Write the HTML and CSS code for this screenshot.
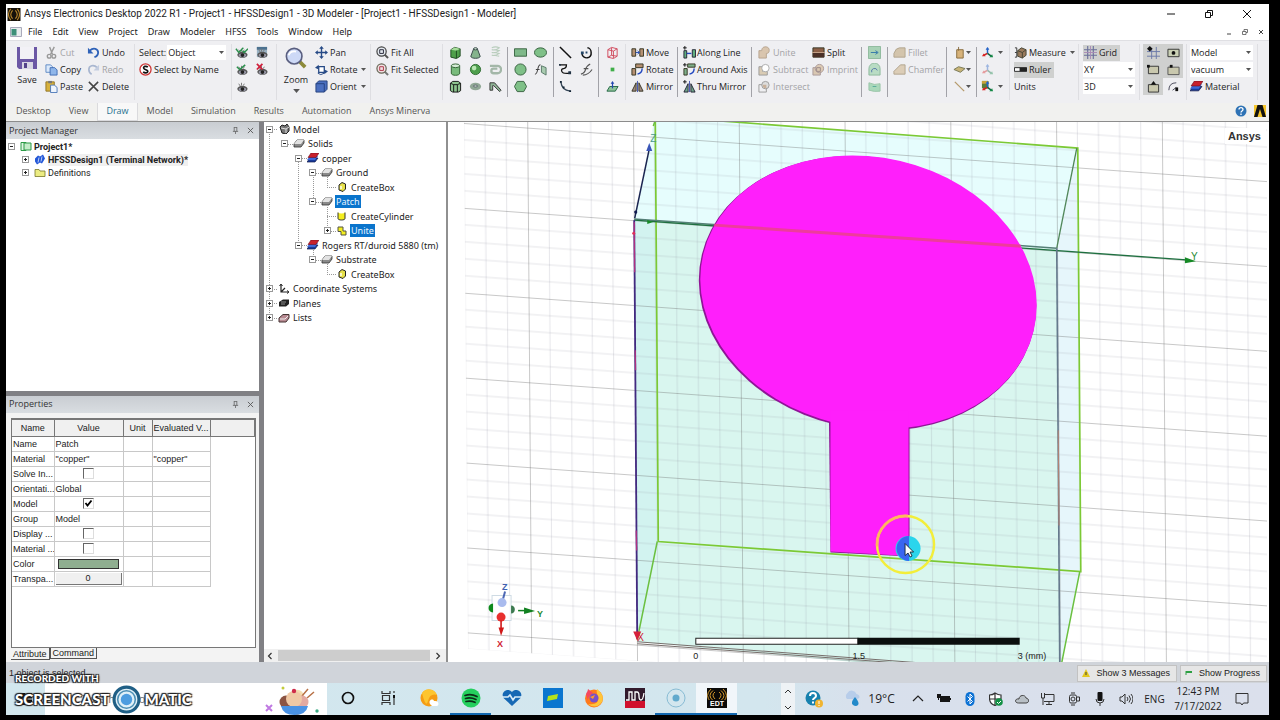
FILE: index.html
```html
<!DOCTYPE html>
<html lang="en">
<head>
<meta charset="utf-8">
<title>Ansys Electronics Desktop 2022 R1</title>
<link rel="stylesheet" href="styles.css">
</head>
<body>
<svg class="defs" aria-hidden="true">
  <symbol id="caret" viewBox="0 0 5 3"><path d="M0 0h5L2.500 3z" fill="#555"/></symbol>
  <symbol id="eye" viewBox="0 0 14 14"><path d="M4 4l2 3M7 3v3M10 4L9 6" stroke="#777" stroke-width="1"/><ellipse cx="8" cy="9.500" rx="5.500" ry="3.200" fill="#555"/><ellipse cx="8" cy="10" rx="4" ry="2" fill="#99a"/><circle cx="8" cy="9.800" r="2" fill="#222"/></symbol>
  <symbol id="sheet" viewBox="0 0 12 10"><path d="M3 5h8l-3 4H0z" fill="#173b9c" stroke="#101848" stroke-width=".7"/><path d="M3 3h8L8 7H0z" fill="#3d68d8"/><path d="M4 0h8L9 4.500H1z" fill="#c8202c" stroke="#701020" stroke-width=".6"/></symbol>
  <symbol id="solid" viewBox="0 0 12 10"><path d="M4 1h7v3L8 8H1V5z" fill="#8a8a8a" stroke="#333" stroke-width=".8"/><path d="M4 1h7L8 5H1z" fill="#e2e2e2"/></symbol>
  <symbol id="ybox" viewBox="0 0 12 10"><path d="M3 3l3-2.500L9.500 2v5L7 9.500 3 8z" fill="#e6e04a" stroke="#222" stroke-width="1"/><path d="M5 4v3" stroke="#fff" stroke-width="1.400"/></symbol>
  <symbol id="axes" viewBox="0 0 14 14"><path d="M7 8V2" stroke="#2463c8" stroke-width="1.600"/><path d="M5 4l2-3 2 3z" fill="#2463c8"/><path d="M7 8l-4 2" stroke="#c22" stroke-width="1.600"/><path d="M1 11l2-3 2 3z" fill="#d22"/><path d="M7 8l4 3" stroke="#164" stroke-width="1.600"/><path d="M13 12H9l3-3z" fill="#184"/></symbol>
  <symbol id="ice" viewBox="0 0 12 18"><path d="M2 8h8L6 17z" fill="#c98f55"/><circle cx="6" cy="5" r="4" fill="#f4dcb0"/><path d="M1 8h10" stroke="#f0c88c" stroke-width="2.500"/></symbol>
</svg>
<div class="app">
  <header class="titlebar">
    <svg class="logo" viewBox="0 0 14 14"><path d="M0 0h14v14H0z" fill="#16110a"/><path d="M5.500 2.500q-4 4.500 0 9M3.500 1q-5 6 0 12M8.500 2.500q4 4.500 0 9M10.500 1q5 6 0 12" fill="none" stroke="#b8862c" stroke-width="1.200"/></svg>
    <h1>Ansys Electronics Desktop 2022 R1 - Project1 - HFSSDesign1 - 3D Modeler - [Project1 - HFSSDesign1 - Modeler]</h1>
    <div class="winctl">
      <button aria-label="Minimize"><svg viewBox="0 0 10 10"><path d="M1 5h8" stroke="#111"/></svg></button>
      <button aria-label="Restore"><svg viewBox="0 0 10 10"><path d="M1.500 3.500h5v5h-5zM3.500 3.500v-2h5v5h-2" fill="none" stroke="#111"/></svg></button>
      <button aria-label="Close"><svg viewBox="0 0 10 10"><path d="M1 1l8 8M9 1L1 9" stroke="#111"/></svg></button>
    </div>
  </header>
  <nav class="menubar">
    <svg class="mdi" viewBox="0 0 12 10"><path d="M.5.5h11v9H.5z" fill="#e8ecee" stroke="#aab"/><path d="M1.500 2h5v6.500h-5z" fill="#3c8f78"/></svg>
    <button>File</button><button>Edit</button><button>View</button><button>Project</button><button>Draw</button><button>Modeler</button><button>HFSS</button><button>Tools</button><button>Window</button><button>Help</button>
    <div class="mdictl">
      <button aria-label="Minimize document"><svg viewBox="0 0 6 6"><path d="M1 5h4" stroke="#444"/></svg></button>
      <button aria-label="Restore document"><svg viewBox="0 0 6 6"><path d="M.5 2.500h3.500v3H.5zM2 2.500v-2h3.500v3H4" fill="none" stroke="#555" stroke-width=".8"/></svg></button>
      <button aria-label="Close document"><svg viewBox="0 0 6 6"><path d="M1 1l4 4M5 1L1 5" stroke="#444"/></svg></button>
    </div>
  </nav>

  <section class="ribbon" aria-label="Draw ribbon">
    <div class="group g-clip">
      <button class="big"><svg viewBox="0 0 22 22"><path d="M1 0h20v22H3l-2-2z" fill="#6b57a5"/><path d="M4 0h14v12H4z" fill="#f2f1f6"/><path d="M6 15h11v7H6z" fill="#d8d6e4"/><path d="M8 16h3v5H8z" fill="#53428a"/></svg>Save</button>
      <button class="cmd off"><svg viewBox="0 0 14 14"><path d="M5 1l3 8M10 1L6 9" stroke="#999" stroke-width="1.500"/><circle cx="4.500" cy="11" r="2" fill="none" stroke="#999" stroke-width="1.500"/><circle cx="9.500" cy="11" r="2" fill="none" stroke="#999" stroke-width="1.500"/></svg>Cut</button>
      <button class="cmd"><svg viewBox="0 0 14 14"><path d="M1 2h5l2 2v6H1z" fill="#dbe9fa" stroke="#5c87c4"/><path d="M5.500 5h5l2.500 2.500V13H5.500z" fill="#8fb6ea" stroke="#3f6cb4"/></svg>Copy</button>
      <button class="cmd"><svg viewBox="0 0 14 14"><path d="M1 2h9v10H1z" fill="#d7b13d" stroke="#8f7426"/><path d="M3.500 1h4v2.500h-4z" fill="#777"/><path d="M6 5.500h4l3 2.500v5.500H6z" fill="#eef4fc" stroke="#4b77b8"/></svg>Paste</button>
      <button class="cmd"><svg viewBox="0 0 14 14"><path d="M3 5c4-4 9-2 9 2 0 2-1 4-4 5" fill="none" stroke="#2f62b8" stroke-width="2"/><path d="M1 2v6h6z" fill="#2f62b8"/></svg>Undo</button>
      <button class="cmd off"><svg viewBox="0 0 14 14"><path d="M11 5c-4-4-9-2-9 2 0 2 1 4 3 5" fill="none" stroke="#a8b6d0" stroke-width="1.800"/><path d="M13 2v6H7z" fill="#c4cde0"/></svg>Redo</button>
      <button class="cmd"><svg viewBox="0 0 14 14"><path d="M2 2l10 10M12 2L2 12" stroke="#444" stroke-width="1.600"/></svg>Delete</button>
    </div>
    <div class="group g-select">
      <label class="field">Select:<select><option>Object</option></select></label>
      <button class="cmd"><svg viewBox="0 0 14 14"><circle cx="7" cy="7" r="6" fill="#fff" stroke="#c33" stroke-width="1.400"/><path d="M9.500 4.500C8 3 4.500 3.500 5 5.500s4.500 1.500 4.500 3.500S6 11 4.500 9.500" fill="none" stroke="#111" stroke-width="1.800"/></svg>Select by Name</button>
    </div>
    <div class="group g-vis">
      <button class="ico" aria-label="Show"><svg viewBox="0 0 14 14"><use href="#eye"/><path d="M1 3l3 4 5-5M8 5l2 2 4-4" fill="none" stroke="#2b8f4c" stroke-width="1.500"/></svg></button>
      <button class="ico" aria-label="Show selection"><svg viewBox="0 0 14 14"><use href="#eye"/><path d="M2 4l3 3 6-5" fill="none" stroke="#2b8f4c" stroke-width="1.600"/></svg></button>
      <button class="ico" aria-label="Hide"><svg viewBox="0 0 14 14"><use href="#eye"/></svg></button>
      <button class="ico" aria-label="Visibility"><svg viewBox="0 0 14 14"><path d="M2 1h11v11H2z" fill="#9ab2c4"/><path d="M2 1h11v3H2z" fill="#4d7290"/><use href="#eye"/></svg></button>
      <button class="ico" aria-label="Hide selection"><svg viewBox="0 0 14 14"><use href="#eye"/><path d="M2 1l6 6M8 1L2 7" stroke="#d0203c" stroke-width="1.900"/></svg></button>
    </div>
    <div class="group g-zoom">
      <button class="big"><svg viewBox="0 0 24 24"><path d="M15 15l7 7" stroke="#8c8a3a" stroke-width="4"/><circle cx="10" cy="10" r="8.500" fill="#cdd9f6" stroke="#5a5f80" stroke-width="1.800"/><path d="M4 9q2-5 8-4" stroke="#fff" stroke-width="2" fill="none"/></svg>Zoom<svg class="caret"><use href="#caret"/></svg></button>
      <button class="cmd"><svg viewBox="0 0 14 14"><path d="M7 2v10M2 7h10" stroke="#274a86" stroke-width="1.500"/><path d="M7 0l2.500 3h-5zM7 14l2.500-3h-5zM0 7l3-2.500v5zM14 7l-3-2.500v5z" fill="#274a86"/></svg>Pan</button>
      <button class="cmd"><svg viewBox="0 0 14 14"><path d="M4 4h6v6H4z" fill="#fff" stroke="#274a86" stroke-width="1.400"/><path d="M0 5l4-3v5zM14 9l-4 3V7z" fill="#274a86"/><path d="M3 11q3 3 7 0" stroke="#274a86" fill="none"/></svg>Rotate<svg class="caret"><use href="#caret"/></svg></button>
      <button class="cmd"><svg viewBox="0 0 14 14"><path d="M1 4l3-3h9v9l-3 3H1z" fill="#4a6fc0" stroke="#24407c"/><path d="M1 4h9v9" fill="none" stroke="#24407c"/></svg>Orient<svg class="caret"><use href="#caret"/></svg></button>
    </div>
    <div class="group g-fit">
      <button class="cmd"><svg viewBox="0 0 14 14"><path d="M9 9l4 4" stroke="#555" stroke-width="2.200"/><circle cx="6" cy="6" r="5" fill="#e3e8ee" stroke="#444" stroke-width="1.300"/><path d="M4 4h4v4H4z" fill="none" stroke="#223"/></svg>Fit All</button>
      <button class="cmd"><svg viewBox="0 0 14 14"><path d="M9 9l4 4" stroke="#777" stroke-width="2.200"/><circle cx="6" cy="6" r="5" fill="#f2dfe2" stroke="#665" stroke-width="1.300"/><path d="M4 4h4v4H4z" fill="none" stroke="#a34"/></svg>Fit Selected</button>
    </div>
    <div class="group dark g-solid">
      <button class="ico" aria-label="Box"><svg viewBox="0 0 14 14"><path d="M2 4l4-2.500L12 3v8l-4 2.500L2 12z" fill="#4f9f4a" stroke="#1e4a20"/><path d="M2 4l4-2.500L12 3 8 5z" fill="#a6dc9a"/><path d="M8 5v8" stroke="#1e4a20"/></svg></button>
      <button class="ico" aria-label="Cylinder"><svg viewBox="0 0 14 14"><path d="M2.500 3v8c0 3 9 3 9 0V3" fill="#79bb7c" stroke="#2d5f30"/><ellipse cx="7" cy="3" rx="4.500" ry="2" fill="#d6ecd6" stroke="#2d5f30"/></svg></button>
      <button class="ico" aria-label="Regular polyhedron"><svg viewBox="0 0 14 14"><path d="M1.500 3.500L4 1.500h6l2.500 2v8L10 13H4l-2.500-1.500z" fill="#8ec48f" stroke="#111"/><path d="M1.500 3.500L5 5h4l3.500-1.500M5 5v8M9 5v8" fill="none" stroke="#111"/></svg></button>
      <button class="ico" aria-label="Cone"><svg viewBox="0 0 14 14"><path d="M5 3L2 11c0 3 10 3 10 0L9 3z" fill="#85b48c" stroke="#344"/><ellipse cx="7" cy="3" rx="2" ry="1.200" fill="#d0e6d2" stroke="#344"/></svg></button>
      <button class="ico" aria-label="Sphere"><svg viewBox="0 0 14 14"><circle cx="7" cy="7" r="5.500" fill="#4d9e4c" stroke="#2b6a2e"/><circle cx="5.500" cy="5.500" r="2.500" fill="#b9e6b2"/></svg></button>
      <button class="ico" aria-label="Torus"><svg viewBox="0 0 14 14"><ellipse cx="7" cy="7" rx="6" ry="4" fill="#91a896"/><ellipse cx="7" cy="6.500" rx="2.500" ry="1" fill="#eee" stroke="#566"/></svg></button>
      <button class="ico" aria-label="Helix"><svg viewBox="0 0 14 14"><path d="M3 2q4-2 8 0-4 3-8 2 4 0 8 1-4 3-8 2 4 0 8 1-4 3-8 2 4 0 8 1" fill="none" stroke="#b9cdbd" stroke-width="1.200"/></svg></button>
      <button class="ico" aria-label="Spiral"><svg viewBox="0 0 14 14"><path d="M1 3h8a4 4 0 010 8H5a2.500 2.500 0 010-5h4" fill="none" stroke="#a3b7a8" stroke-width="2.500"/></svg></button>
      <button class="ico" aria-label="Bondwire"><svg viewBox="0 0 14 14"><path d="M1 11V3h5l7 8-1.500 1.500L5 6H4v5z" fill="#8fb496" stroke="#333"/></svg></button>
    </div>
    <div class="group dark g-sheet">
      <button class="ico" aria-label="Rectangle"><svg viewBox="0 0 14 14"><path d="M.5 3h13v8H.5z" fill="#7fb98a" stroke="#355f3e"/></svg></button>
      <button class="ico" aria-label="Circle"><svg viewBox="0 0 14 14"><circle cx="7" cy="7" r="6" fill="#7fc088" stroke="#355f3e"/></svg></button>
      <button class="ico" aria-label="Regular polygon"><svg viewBox="0 0 14 14"><path d="M3.500 1.500h7L13.500 7l-3 5.500h-7L.5 7z" fill="#7fc088" stroke="#355f3e"/></svg></button>
      <button class="ico" aria-label="Ellipse"><svg viewBox="0 0 14 14"><ellipse cx="7" cy="7" rx="6.500" ry="5" fill="#7fc088" stroke="#355f3e"/></svg></button>
      <button class="ico" aria-label="Equation surface"><svg viewBox="0 0 14 14"><path d="M8 3l5 2v8L8 10z" fill="#a9cbb0" stroke="#576"/><path d="M1 12q2 0 3-5t3-5M2 7h4" fill="none" stroke="#444" stroke-width="1.100"/></svg></button>
    </div>
    <div class="group dark g-line">
      <button class="ico" aria-label="Line"><svg viewBox="0 0 14 14"><path d="M1 1l12 12" stroke="#111" stroke-width="1.600"/></svg></button>
      <button class="ico" aria-label="Spline"><svg viewBox="0 0 14 14"><path d="M1 2h7q0 4-3 4t-2 3 9 2" fill="none" stroke="#111" stroke-width="1.400"/><path d="M10 9h3v3h-3zM0 1h2v2H0z" fill="#234"/></svg></button>
      <button class="ico" aria-label="Arc"><svg viewBox="0 0 14 14"><path d="M2 2q1 9 10 10" fill="none" stroke="#345" stroke-width="1.400"/><path d="M1 1h2v2H1zM4 7h2v2H4zM11 11h2v2h-2z" fill="#123"/></svg></button>
      <button class="ico" aria-label="Centre arc"><svg viewBox="0 0 14 14"><path d="M2 8c1 7 11 6 10-1 0-3-2-5-4-5" fill="none" stroke="#111" stroke-width="1.600"/><path d="M6 6h2v2H6zM1 6h3v3H1z" fill="#246"/></svg></button>
      <button class="ico" aria-label="Equation curve"><svg viewBox="0 0 14 14"><path d="M1 12q4-1 5-5t5-6M4 6h5M3 13q6 0 10-6" fill="none" stroke="#555" stroke-width="1.200"/></svg></button>
    </div>
    <div class="group g-point">
      <button class="ico" aria-label="Region"><svg viewBox="0 0 14 14"><path d="M2 4l4-2.500L12 3v8l-4 2.500L2 12zM2 4l6 1.500L12 3M8 5.500V13M6 2v8l-4 2M6 10l6 1" fill="none" stroke="#d0485c"/></svg></button>
      <button class="ico" aria-label="Point"><svg viewBox="0 0 14 14"><path d="M5 5h4v4H5z" fill="#3fae49"/></svg></button>
      <button class="ico" aria-label="Plane"><svg viewBox="0 0 14 14"><path d="M4 7h9l-3 5H1z" fill="#8fc49a" stroke="#264"/><path d="M7 9V3" stroke="#2348b0" stroke-width="1.300"/><path d="M5 4l2-3 2 3z" fill="#2348b0"/></svg></button>
    </div>
    <div class="group dark g-move">
      <button class="cmd"><svg viewBox="0 0 14 14"><path d="M1 3h4v8H1zM9.500 3h4v8h-4z" fill="#b59072" stroke="#332"/><path d="M5 7h4M7 5l2 2-2 2" stroke="#2348b0" fill="none"/></svg>Move</button>
      <button class="cmd"><svg viewBox="0 0 14 14"><path d="M1 6h4v7H1zM5 1h8v4H5z" fill="#b59072" stroke="#332"/><path d="M12 6q0 5-5 6" stroke="#2348c0" stroke-width="1.500" fill="none"/></svg>Rotate</button>
      <button class="cmd"><svg viewBox="0 0 14 14"><path d="M1 12l4.500-9v9zM13 12L8.500 3v9z" fill="#a38a80" stroke="#332"/><path d="M7 1v12" stroke="#4050b0"/></svg>Mirror</button>
    </div>
    <div class="group dark g-dup">
      <button class="cmd"><svg viewBox="0 0 14 14"><path d="M1 5h3v8H1zM10 4h3.500v8H10z" fill="#5fae80" stroke="#223"/><path d="M4 8h5" stroke="#2348c0" stroke-width="1.500"/><path d="M0 2h4M2 0v4" stroke="#111"/></svg>Along Line</button>
      <button class="cmd"><svg viewBox="0 0 14 14"><path d="M1 6h3.500v7H1zM5 1h8v3.500H5z" fill="#7fb08a" stroke="#332"/><path d="M12 6q0 5-5 6" stroke="#2348c0" stroke-width="1.500" fill="none"/><path d="M0 2h4M2 0v4" stroke="#111"/></svg>Around Axis</button>
      <button class="cmd"><svg viewBox="0 0 14 14"><path d="M1 13l4.500-9v9zM13 13L8.500 4v9z" fill="#6fa48a" stroke="#223"/><path d="M7 1v12" stroke="#4050b0"/><path d="M0 2h4M2 0v4" stroke="#111"/></svg>Thru Mirror</button>
    </div>
    <div class="group dark g-bool">
      <button class="cmd off"><svg viewBox="0 0 14 14"><path d="M1 5h3c0-6 9-5 8 0 0 2-1 3-3 3v5H1z" fill="#d9c5ae" stroke="#b5a28c"/></svg>Unite</button>
      <button class="cmd off"><svg viewBox="0 0 14 14"><path d="M1 4h4v5h5v4H1z" fill="#d9cbb4" stroke="#999"/><circle cx="8" cy="5.500" r="4" fill="#fff" stroke="#aaa"/></svg>Subtract</button>
      <button class="cmd off"><svg viewBox="0 0 14 14"><path d="M1 5h8v8H1z" fill="none" stroke="#999"/><circle cx="8" cy="5.500" r="4" fill="#ddd" stroke="#999"/><path d="M5 5h4v4q-4 0-4-4" fill="#c8b09a"/></svg>Intersect</button>
      <button class="cmd"><svg viewBox="0 0 14 14"><path d="M1 2h12v10H1z" fill="#8c6047" stroke="#332"/><path d="M1 7h12v5H1z" fill="#4a3027"/><path d="M0 7h14" stroke="#c9a88c"/></svg>Split</button>
      <button class="cmd off"><svg viewBox="0 0 14 14"><path d="M1 5h8v8H1z" fill="#d9c7b2" stroke="#a99"/><circle cx="8" cy="6" r="4.500" fill="#dccab4" stroke="#a99"/><path d="M5 5h4v4H5z" fill="none" stroke="#988"/></svg>Imprint</button>
    </div>
    <div class="group dark g-surf">
      <button class="ico" aria-label="Move face"><svg viewBox="0 0 14 14"><path d="M.5.5h13v13H.5z" fill="#a9d2b6" stroke="#8bb89a"/><path d="M3 7h7M8 5l3 2-3 2" stroke="#37a" fill="none"/></svg></button>
      <button class="ico" aria-label="Offset face"><svg viewBox="0 0 14 14"><path d="M1 13V6a6 6 0 0112 0v7z" fill="#b9dcc4" stroke="#8bb89a"/><path d="M4 10a3 3 0 016-2" stroke="#57a" fill="none"/></svg></button>
      <button class="ico" aria-label="Sweep face"><svg viewBox="0 0 14 14"><path d="M1 3q6 3 12 1v8q-6 1-12-1z" fill="#a9d8ba" stroke="#9ac4a8"/><path d="M5 7h4" stroke="#5a9"/></svg></button>
    </div>
    <div class="group dark g-fillet">
      <button class="cmd off"><svg viewBox="0 0 14 14"><path d="M1 12V8q2-6 6-6h6v10z" fill="#d3c4ac" stroke="#b0a48e"/></svg>Fillet</button>
      <button class="cmd off"><svg viewBox="0 0 14 14"><path d="M1 12V9l7-7h5v10z" fill="#dccdb7" stroke="#b0a48e"/></svg>Chamfer</button>
    </div>
    <div class="group dark g-sweep">
      <button class="cmd" aria-label="Sweep solid"><svg viewBox="0 0 14 14"><path d="M4 4h7v9H4z" fill="#d7b27a" stroke="#866a3c"/><path d="M6 1v4" stroke="#866a3c"/></svg><svg class="caret"><use href="#caret"/></svg></button>
      <button class="cmd" aria-label="Sweep sheet"><svg viewBox="0 0 14 14"><path d="M1 7l5-3 7 2-5 4z" fill="#c8b478" stroke="#775"/></svg><svg class="caret"><use href="#caret"/></svg></button>
      <button class="cmd" aria-label="Sweep line"><svg viewBox="0 0 14 14"><path d="M2 2l10 10" stroke="#b59a6c" stroke-width="1.400"/></svg><svg class="caret"><use href="#caret"/></svg></button>
    </div>
    <div class="group g-cs">
      <button class="cmd" aria-label="Relative coordinate system"><svg viewBox="0 0 14 14"><use href="#axes"/></svg><svg class="caret"><use href="#caret"/></svg></button>
      <button class="cmd faded" aria-label="Face coordinate system"><svg viewBox="0 0 14 14"><use href="#axes"/></svg></button>
      <button class="cmd" aria-label="Object coordinate system"><svg viewBox="0 0 14 14"><path d="M1 1h7v8H1z" fill="#5a7d3a"/><path d="M1 1h7v3H1z" fill="#c8a23a"/><use href="#axes"/></svg><svg class="caret"><use href="#caret"/></svg></button>
    </div>
    <div class="group g-measure">
      <button class="cmd"><svg viewBox="0 0 14 14"><path d="M1 2h2v10H1M1 7h2" fill="none" stroke="#333"/><path d="M4 5l4-3 5 2v6l-4 3-5-2z" fill="#9a7a5c" stroke="#443"/><path d="M4 5l5 2 4-3M9 7v6" fill="none" stroke="#443"/></svg>Measure<svg class="caret"><use href="#caret"/></svg></button>
      <button class="cmd pressed"><svg viewBox="0 0 14 14"><path d="M.5 5h13v4H.5z" fill="#fff" stroke="#222"/><path d="M6 5h8v4H6z" fill="#222"/></svg>Ruler</button>
      <button class="cmd">Units</button>
    </div>
    <div class="group g-grid">
      <button class="cmd pressed"><svg viewBox="0 0 14 14"><path d="M4 0v14M10 0v14M0 4h14M0 10h14" stroke="#6a6f9a" stroke-width="1.200"/><path d="M7 0v14M0 7h14" stroke="#a88ab4"/></svg>Grid</button>
      <select aria-label="Drawing plane"><option>XY</option></select>
      <select aria-label="Movement mode"><option>3D</option></select>
    </div>
    <div class="group g-snap">
      <button class="ico pressed" aria-label="Snap to grid"><svg viewBox="0 0 14 14"><path d="M5 2v12M10 1v13M0 6h14M0 11h14" stroke="#6a78a8"/><path d="M3 0l3 3-3 3-3-3z" fill="#111"/></svg></button>
      <button class="ico pressed" aria-label="Snap to vertex"><svg viewBox="0 0 14 14"><path d="M1.500 3.500h11v8h-11z" fill="#c9c8ae" stroke="#333"/><path d="M0 2h3v3H0z" fill="#111"/></svg></button>
      <button class="ico pressed" aria-label="Snap to edge centre"><svg viewBox="0 0 14 14"><path d="M1.500 5h11v8h-11z" fill="#c9c8ae" stroke="#333"/><path d="M7 1l3 4H4z" fill="#111"/></svg></button>
      <button class="ico pressed" aria-label="Snap to face centre"><svg viewBox="0 0 14 14"><path d="M1 3.500h12v8H1z" fill="#c9d0b4" stroke="#333"/><circle cx="7" cy="7.500" r="2" fill="#111"/></svg></button>
      <button class="ico pressed" aria-label="Snap to quadrant"><svg viewBox="0 0 14 14"><path d="M1 4.500h12v8H1z" fill="#c9c8ae" stroke="#555"/><path d="M3 2h3v3H3z" fill="#111"/></svg></button>
      <button class="ico" aria-label="Snap to arc centre"><svg viewBox="0 0 14 14"><path d="M2 11q0-8 8-8M6 11l4-3" fill="none" stroke="#445"/><path d="M9 8h3v4H9z" fill="#111"/></svg></button>
    </div>
    <div class="group g-mat">
      <select aria-label="Object type"><option>Model</option></select>
      <select aria-label="Default material"><option>vacuum</option></select>
      <button class="cmd"><svg><use href="#sheet"/></svg>Material</button>
    </div>
  </section>

  <nav class="tabs">
    <button>Desktop</button><button>View</button><button class="active">Draw</button><button>Model</button><button>Simulation</button><button>Results</button><button>Automation</button><button>Ansys Minerva</button>
    <div class="help">
      <svg viewBox="0 0 12 12"><circle cx="6" cy="6" r="5.500" fill="#2f73b5"/><path d="M4 4.500C4 2 8 2 8 4.500 8 6 6 6 6 7.500M6 8.500V10" fill="none" stroke="#fff" stroke-width="1.300"/></svg>
      <svg viewBox="0 0 12 12"><path d="M0 0h12v12H0z" fill="#f6c62c"/><path d="M3.500 0h5L12 12H8.500L6 4 3.500 12H0z" fill="#111"/></svg>
    </div>
  </nav>

  <main class="work">
    <div class="dock">
      <section class="pane project">
        <header class="panehead"><h2>Project Manager</h2><button aria-label="Pin project manager"><svg viewBox="0 0 8 8"><path d="M2.500 0v5M5.500 0v5M1 5h6M4 5v3M2.500.5h3" stroke="#555" fill="none" stroke-width=".8"/></svg></button><button aria-label="Close project manager"><svg viewBox="0 0 8 8"><path d="M1 1l6 6M7 1L1 7" stroke="#555"/></svg></button></header>
        <ul class="ptree">
          <li><button class="exp minus" aria-label="Collapse"></button><svg viewBox="0 0 12 10"><path d="M1 1h5v8H1z" fill="#dff5e2" stroke="#2c9a46"/><path d="M4 1.500h7v7H4z" fill="#c5ecc9" stroke="#2c9a46"/></svg><b>Project1*</b></li>
          <li class="in"><button class="exp" aria-label="Expand"></button><svg viewBox="0 0 12 10"><path d="M1 4l3-3 2 1 3-2 2 4-3 5-2-1-3 2-2-3z" fill="#2458d8"/><path d="M4 8l1-5M7 7l1-5" stroke="#fff" stroke-width=".7"/></svg><b class="cur">HFSSDesign1 (Terminal Network)*</b></li>
          <li class="in"><button class="exp" aria-label="Expand"></button><svg viewBox="0 0 12 10"><path d="M1 2h4l1 1.500h5V9H1z" fill="#ecec82" stroke="#77772a" stroke-width=".8"/></svg><span>Definitions</span></li>
        </ul>
      </section>
      <section class="pane props">
        <header class="panehead"><h2>Properties</h2><button aria-label="Pin properties"><svg viewBox="0 0 8 8"><path d="M2.500 0v5M5.500 0v5M1 5h6M4 5v3M2.500.5h3" stroke="#555" fill="none" stroke-width=".8"/></svg></button><button aria-label="Close properties"><svg viewBox="0 0 8 8"><path d="M1 1l6 6M7 1L1 7" stroke="#555"/></svg></button></header>
        <div class="sheetbox">
          <table>
            <colgroup><col class="c1"><col class="c2"><col class="c3"><col class="c4"><col class="c5"></colgroup>
            <thead><tr><th>Name</th><th>Value</th><th>Unit</th><th>Evaluated V...</th><th></th></tr></thead>
            <tbody>
              <tr><td>Name</td><td>Patch</td><td></td><td></td></tr>
              <tr><td>Material</td><td>"copper"</td><td></td><td>"copper"</td></tr>
              <tr><td>Solve In...</td><td class="mid"><input type="checkbox" aria-label="Solve Inside"></td><td></td><td></td></tr>
              <tr><td>Orientati...</td><td>Global</td><td></td><td></td></tr>
              <tr><td>Model</td><td class="mid"><input type="checkbox" aria-label="Model" checked></td><td></td><td></td></tr>
              <tr><td>Group</td><td>Model</td><td></td><td></td></tr>
              <tr><td>Display ...</td><td class="mid"><input type="checkbox" aria-label="Display Wireframe"></td><td></td><td></td></tr>
              <tr><td>Material ...</td><td class="mid"><input type="checkbox" aria-label="Material Appearance"></td><td></td><td></td></tr>
              <tr><td>Color</td><td><button class="swatch" aria-label="Color"></button></td><td></td><td></td></tr>
              <tr><td>Transpa...</td><td><button class="value">0</button></td><td></td><td></td></tr>
            </tbody>
          </table>
        </div>
        <div class="sheettabs"><button class="on">Attribute</button><button>Command</button></div>
      </section>
    </div>
    <section class="model">
      <div class="mtree">
        <svg class="guides" viewBox="0 0 182 203"><path d="M5.500 10v186M34.500 40v83M49.500 55v25M63.500 55v10M63.500 85v24M49.500 128v9M63.500 138v14M6 7.500h8M20 22.500h10M34 36.500h10M48 51.500h10M63 65.500h10M48 80.500h10M63 94.500h10M63 109.500h10M34 123.500h10M48 138.500h10M63 152.500h10M6 167.500h8M6 181.500h8M6 196.500h8" fill="none" stroke="#999" stroke-dasharray="1 1"/></svg>
        <ul>
          <li><button class="exp minus" aria-label="Collapse"></button><svg viewBox="0 0 12 10"><path d="M2 3l2-2 3 1 2-2 2 3v4L8 10 4 9z" fill="#777" stroke="#222"/><path d="M3 4l5 1v4M8 5l3-2" stroke="#ddd" fill="none"/></svg><span>Model</span></li>
          <li class="l1"><button class="exp minus" aria-label="Collapse"></button><svg><use href="#solid"/></svg><span>Solids</span></li>
          <li class="l2"><button class="exp minus" aria-label="Collapse"></button><svg><use href="#sheet"/></svg><span>copper</span></li>
          <li class="l3"><button class="exp minus" aria-label="Collapse"></button><svg><use href="#solid"/></svg><span>Ground</span></li>
          <li class="l4"><i class="exp none"></i><svg><use href="#ybox"/></svg><span>CreateBox</span></li>
          <li class="l3"><button class="exp minus" aria-label="Collapse"></button><svg><use href="#solid"/></svg><span class="sel">Patch</span></li>
          <li class="l4"><i class="exp none"></i><svg viewBox="0 0 12 10"><path d="M2 1.500v6c0 2 7 2 7 0v-6" fill="#f4ee20" stroke="#333"/><ellipse cx="5.500" cy="1.500" rx="3" ry="1" fill="#fff"/></svg><span>CreateCylinder</span></li>
          <li class="l4"><button class="exp" aria-label="Expand"></button><svg viewBox="0 0 12 10"><path d="M2 1h5v4h3v4H5V5.500H2z" fill="#f4ee20" stroke="#554"/></svg><span class="sel">Unite</span></li>
          <li class="l2"><button class="exp minus" aria-label="Collapse"></button><svg><use href="#sheet"/></svg><span>Rogers RT/duroid 5880 (tm)</span></li>
          <li class="l3"><button class="exp minus" aria-label="Collapse"></button><svg><use href="#solid"/></svg><span>Substrate</span></li>
          <li class="l4"><i class="exp none"></i><svg><use href="#ybox"/></svg><span>CreateBox</span></li>
          <li><button class="exp" aria-label="Expand"></button><svg viewBox="0 0 12 10"><path d="M3 1v7h7M3 8l4-4" fill="none" stroke="#222" stroke-width="1.200"/><path d="M1.500 2L3 0l1.500 2M9 6.500L11 8 9 9.500" fill="none" stroke="#222"/></svg><span>Coordinate Systems</span></li>
          <li><button class="exp" aria-label="Expand"></button><svg viewBox="0 0 12 10"><path d="M1 4l4-2.500h6V6L8 8.500H1z" fill="#222"/><path d="M3 4h5M3 6h4" stroke="#aaa" stroke-width=".8"/></svg><span>Planes</span></li>
          <li><button class="exp" aria-label="Expand"></button><svg viewBox="0 0 12 10"><path d="M1 5l4-3.500h6V5L8 9H1z" fill="#b88a92" stroke="#433"/><path d="M2 6h5l3-3" stroke="#eee" fill="none"/></svg><span>Lists</span></li>
        </ul>
      </div>
      <div class="hscroll"><button aria-label="Scroll left"><svg viewBox="0 0 8 8"><path d="M5.500 1l-3 3 3 3" fill="none" stroke="#333" stroke-width="1.200"/></svg></button><div class="thumb"></div><button aria-label="Scroll right"><svg viewBox="0 0 8 8"><path d="M2.500 1l3 3-3 3" fill="none" stroke="#333" stroke-width="1.200"/></svg></button></div>
    </section>
    <section class="view" aria-label="3D view">
      <svg class="scene" viewBox="449 122 820 540" preserveAspectRatio="xMinYMin slice">
        <defs>
          <pattern id="grid" width="105.700" height="84.800" patternUnits="userSpaceOnUse" patternTransform="matrix(1 .0724 .0075 1 634.5 220)">
            <path d="M21.140 0v84.800M42.280 0v84.800M63.420 0v84.800M84.560 0v84.800M0 16.960h105.700M0 33.920h105.700M0 50.880h105.700M0 67.840h105.700" stroke="#889" stroke-opacity=".24" stroke-width=".9"/>
            <path d="M.5 0v84.800M0 .5h105.700" stroke="#666" stroke-opacity=".4" stroke-width=".9"/>
          </pattern>
        </defs>
        <path d="M656 116L1077 148 1080 571 1060 670H945L638 641 635 220z" fill="#d9f6ef"/>
        <path d="M656 116L1077 148 1057 248 635 219z" fill="#e6fdfd"/>
        <path d="M635 220l22 2 1 319-20 100z" fill="#d2f3f0"/>
        <path d="M1077 148l3 423-18 91h-2l-3-414z" fill="#e6f6fb"/>
        <path d="M465 122H1267V706L469 648z" fill="url(#grid)"/>
        <g fill="none">
          <path d="M638 641l280 21M638 643l257 19" stroke="#776f6c"/>
          <path d="M656 116l1.500 200 1.500 225 422 30-3-423L656 116" stroke="#7cc935" stroke-width="1.700"/>
          <path d="M654 126l3-8M658 541l-20 98M1080 571l-18 91" stroke="#6bc040" stroke-width="1.500"/>
          <path d="M1077 148l-20 100" stroke="#4f8558" stroke-width="1.300"/>
          <path d="M635 219l422 29" stroke="#557f77" stroke-width="1.500"/>
          <path d="M635 220l555 40" stroke="#1f7040" stroke-width="1.400"/>
          <path d="M1057 248l3 414" stroke="#65798c" stroke-width="1.600"/>
          <path d="M1058.500 430l.8 95" stroke="#b38272"/>
          <path d="M635 220l3 418" stroke="#422a80" stroke-width="1.800"/>
          <path d="M635 222l.4 50M636 350l.4 20M637 530l.4 20" stroke="#b03080" stroke-width="1.200"/>
          <path d="M635.500 218L650 149" stroke="#1b2450" stroke-width="1.500"/>
        </g>
        <ellipse rx="168.500" ry="136.500" transform="matrix(1 .0724 .0075 1 868 293)" fill="#8f1596"/>
        <path d="M829.500 419h80.500v137l-79-4z" fill="#8f1596"/>
        <ellipse rx="168" ry="136" transform="matrix(1 .0724 .0075 1 869 292)" fill="#ff1ffb"/>
        <path d="M831 410h78v145.500l-78-4.500z" fill="#ff1ffb"/>
        <path d="M715 225l306 21" stroke="#ee3b9c" stroke-width="3"/>
        <path d="M1185 257l11 4-11 2zM648 220l6 2-6 2z" fill="#168a26"/>
        <path d="M650 143l3 8h-6z" fill="#3a56b8"/><circle cx="636.500" cy="212" r="1.600" fill="#101a50"/>
        <circle cx="634.500" cy="233" r="1.500" fill="#e0305a"/>
        <path d="M634 631h8l-4 9z" fill="#d6203a"/>
        <text x="651" y="142" class="axis teal">Z</text><text x="1191" y="260" class="axis green">Y</text><text x="638" y="640" class="axis red">X</text>
        <path d="M1225 128h41v16h-41z" fill="#fff"/><text x="1228" y="140" class="brand">Ansys</text>
        <g>
          <path d="M493 595h19v25h-19z" fill="#fff" fill-opacity=".8" stroke="#cfdbe4"/>
          <path d="M503 602l3-11" stroke="#4d67b4" stroke-width="2"/><circle cx="503" cy="602" r="4.500" fill="#a9bbee"/>
          <path d="M494 603c-6 0-6 9 0 9z" fill="#0d8a1c"/><path d="M512 605c5 0 5 8 0 8z" fill="#3c7a50"/>
          <path d="M519 610h10" stroke="#118020" stroke-width="1.500"/><path d="M525 607l11 3.500-11 3z" fill="#118020"/>
          <circle cx="502" cy="616.500" r="4.500" fill="#e8302e"/><path d="M502 620v10" stroke="#d01818" stroke-width="1.600"/><path d="M499.500 627h5.500l-3 8z" fill="#d01818"/>
          <text x="503" y="589" class="triad blue">Z</text><text x="538" y="616" class="triad green">Y</text><text x="498" y="646" class="triad red">X</text>
        </g>
        <path d="M696.500 637.500h162v6h-162z" fill="#fff" stroke="#222"/><path d="M858 637h162v7H858z" fill="#0b0f0e"/>
        <text x="694" y="658" class="scale">0</text><text x="853" y="658" class="scale">1.5</text><text x="1018" y="658" class="scale">3 (mm)</text>
        <circle cx="908.500" cy="548" r="12.500" fill="#2ad5ec"/><path d="M909.500 535.500a12.500 12.500 0 000 25z" fill="#3a66f0"/>
        <circle cx="906" cy="544" r="28.500" fill="none" stroke="#f3ee3a" stroke-width="2.400"/><path d="M877.500 546a28.500 28.500 0 0131-30.500" fill="none" stroke="#ffb560" stroke-width="2.600"/>
        <path d="M905.500 543v12l3-2.500 2 4 2-1-2-4h3.500z" fill="#fff" stroke="#123" stroke-width=".9"/>
      </svg>
    </section>
  </main>

  <footer class="status"><span>1 object is selected</span>
    <button><svg viewBox="0 0 8 8"><path d="M4 0l4 8H0z" fill="#e2c820"/><path d="M4 3v3" stroke="#443"/></svg>Show 3 Messages</button>
    <button><svg viewBox="0 0 8 8"><path d="M1 2h6v2H1z" fill="#2ea043"/><path d="M1 2v4" stroke="#2ea043"/></svg>Show Progress</button>
  </footer>

  <div class="taskbar">
    <button class="start" aria-label="Start"><svg viewBox="0 0 12 12"><path d="M0 0h5.500v5.500H0zM6.500 0H12v5.500H6.500zM0 6.500h5.500V12H0zM6.500 6.500H12V12H6.500z" fill="#111"/></svg></button>
    <div class="search"><input type="text" aria-label="Search" placeholder="Type here to search">
      <svg viewBox="0 0 60 32"><svg x="2" y="5" width="12" height="16"><use href="#ice"/></svg><svg x="47" y="5" width="12" height="16"><use href="#ice"/></svg><path d="M37 13l6-7M42 15l7-6" stroke="#b77045" stroke-width="1.500"/><circle cx="21" cy="19" r="6.500" fill="#8c5443"/><circle cx="37" cy="19" r="6.500" fill="#e4a9a0"/><circle cx="29" cy="16" r="8" fill="#f0c9a5"/><path d="M16 23h27q-2 9-13.500 9T16 23z" fill="#4a92e4"/><circle cx="29" cy="8" r="2.200" fill="#cf2c4a"/><circle cx="18" cy="5" r="1.500" fill="#c3cc3b"/><circle cx="52" cy="28" r="1.700" fill="#3cab84"/><path d="M1 22l6 6M7 22l-6 6" stroke="#c07ae2" stroke-width="2"/></svg></div>
    <div class="apps">
      <button aria-label="Cortana"><svg viewBox="0 0 20 20"><circle cx="10" cy="10" r="5.500" fill="none" stroke="#111" stroke-width="1.700"/></svg></button>
      <button aria-label="Task view"><svg viewBox="0 0 20 20"><path d="M3 3v2.500h8V3M3 17v-2.500h8V17M3.500 7.500h7v5h-7zM15 3v2M15 7v10" fill="none" stroke="#333" stroke-width="1.200"/><path d="M14 7h2v3h-2z" fill="#111"/></svg></button>
      <button aria-label="Weather"><svg viewBox="0 0 20 20"><circle cx="9" cy="10" r="8.500" fill="#f59c14"/><path d="M2 5a8.500 8.500 0 0115 2q-7-2-9 6T2 5z" fill="#fdc52f"/><path d="M10 16c-2-4 3-6 4-3 5-1 6 5 2 5h-4z" fill="#fff"/></svg></button>
      <button class="run" aria-label="Spotify"><svg viewBox="0 0 20 20"><circle cx="10" cy="10" r="9.500" fill="#25cf5e"/><path d="M4 7.500q6-2 12 1M4.500 10.500q5-1.500 10.500 1M5 13.500q4.500-1.200 9 .8" fill="none" stroke="#0b2b16" stroke-width="1.700" stroke-linecap="round"/></svg></button>
      <button aria-label="Health"><svg viewBox="0 0 20 20"><path d="M10 18L1.500 10C-2 4 6-1 10 4c4-5 12 0 8.500 6z" fill="#1668b4"/><path d="M0 9h6l2-2 3 5 2-3h7" fill="none" stroke="#d8ebf8" stroke-width="1.700"/></svg></button>
      <button aria-label="Notes"><svg viewBox="0 0 20 20"><path d="M0 0h20v20H0z" fill="#0a76cf"/><path d="M5 8l5-1-1 5-5 1zM10 7l5-1-1 5-5 1z" fill="#b6e31a"/></svg></button>
      <button aria-label="Firefox"><svg viewBox="0 0 20 20"><circle cx="10" cy="10.500" r="9" fill="#ff7a1c"/><path d="M13 1q8 6 5 13-6 8-14 2 12 2 10-8-2-3-1-7z" fill="#ffc53a"/><path d="M2 6q2-3 2-5l5 4q-6 4-5 8z" fill="#f54860"/><circle cx="10" cy="10" r="4.500" fill="#7850c8"/><path d="M6 9l5-2-2 4z" fill="#ff9a2a"/></svg></button>
      <button aria-label="Signal"><svg viewBox="0 0 20 20"><path d="M0 0h20v20H0z" fill="#321a2c"/><path d="M0 13h20v7H0z" fill="#d0102c"/><path d="M1 12h3V4h3v8h3V4h2q2 0 2 4t2 4 3-7" fill="none" stroke="#fff" stroke-width="1.300"/></svg></button>
      <button class="run" aria-label="Recorder"><svg viewBox="0 0 20 20"><circle cx="10" cy="10" r="9" fill="none" stroke="#88bcd4"/><circle cx="10" cy="10" r="3.500" fill="#62aacd"/></svg></button>
      <button class="run now" aria-label="Electronics Desktop"><svg viewBox="0 0 20 20"><path d="M0 0h20v20H0z" fill="#0b0a08"/><path d="M8 4q-4 3 0 7M6 2.500q-6 5 0 10M4 1q-7 6.500 0 13M12 4q4 3 0 7M14 2.500q6 5 0 10M16 1q7 6.500 0 13" fill="none" stroke="#d3982c" stroke-width="1"/><path d="M2 12h16v8H2z" fill="#0b0a08"/><text x="10" y="18" text-anchor="middle" class="edt">EDT</text></svg></button>
    </div>
    <div class="spin"><button aria-label="Up"><svg viewBox="0 0 8 5"><path d="M1 4l3-3 3 3" fill="none" stroke="#333"/></svg></button><button aria-label="Down"><svg viewBox="0 0 8 5"><path d="M1 1l3 3 3-3" fill="none" stroke="#333"/></svg></button></div>
    <button class="tip" aria-label="Help"><svg viewBox="0 0 18 18"><circle cx="8" cy="8" r="7.500" fill="#1681ae"/><path d="M5 6c0-4 6-4 6 0 0 2-3 2-3 4M8 11.500v2" fill="none" stroke="#fff" stroke-width="2"/><circle cx="14" cy="13.500" r="4" fill="#f0b430"/><path d="M14 11v3M14 15v1" stroke="#fff"/></svg></button>
    <button class="weather"><svg viewBox="0 0 18 18"><path d="M4 9a4 4 0 01.500-6 5 5 0 019 1c4 1 4 5 0 5z" fill="#b7cdea"/><path d="M12 7q5 6 3 8t-5 0 2-8z" fill="#2289c9"/></svg>19°C</button>
    <div class="tray">
      <button aria-label="Show hidden icons"><svg viewBox="0 0 14 14"><path d="M2 9l5-5 5 5" fill="none" stroke="#222" stroke-width="1.200"/></svg></button>
      <button aria-label="Battery"><svg viewBox="0 0 14 14"><path d="M3 4h10v6H3zM13 6h1v2h-1zM0 2h4v4H2v2H1V6H0z" fill="#161616"/></svg></button>
      <button aria-label="Bluetooth"><svg viewBox="0 0 14 14"><rect x="2.500" width="9" height="14" rx="4.500" fill="#0c72d4"/><path d="M4.500 4.500l5 5L7 12V2l2.500 2.500-5 5" fill="none" stroke="#fff"/></svg></button>
      <button aria-label="Security"><svg viewBox="0 0 14 14"><path d="M6 1q3 2 6 2v4q-1 5-6 6.500Q1 12 .5 7V3Q4 3 6 1zM6 1v12M.5 7H12" fill="#fff" stroke="#333" stroke-width="1.200"/><circle cx="10" cy="10" r="3.800" fill="#129044"/><path d="M8 10l1.500 1.500L12 9" fill="none" stroke="#fff"/></svg></button>
      <button aria-label="Cloud"><svg viewBox="0 0 14 14"><path d="M3.500 11C-1 11 0 6 4 7c0-4 6-5 7-1 4 1 3 5 0 5z" fill="#b9c0c6" stroke="#444"/></svg></button>
      <button aria-label="Display"><svg viewBox="0 0 14 14"><path d="M3 2.500h10v7H3M8 10v3M5 12.500h6M.5 1v5h3V1M2 6v7" fill="none" stroke="#333"/></svg></button>
      <button aria-label="Camera"><svg viewBox="0 0 14 14"><rect x="2.500" y="3" width="7" height="8" rx="1.500" fill="none" stroke="#333"/><circle cx="6" cy="7" r="2" fill="none" stroke="#333"/><path d="M10 5h2.500v4H10M4 1h4M4 13h4" fill="none" stroke="#333"/></svg></button>
      <button aria-label="Microphone"><svg viewBox="0 0 14 14"><rect x="4.500" y="0" width="5" height="9" rx="1" fill="#111"/><path d="M3 7q0 4 4 4t4-4M7 11v3" fill="none" stroke="#333"/></svg></button>
      <button aria-label="Volume"><svg viewBox="0 0 14 14"><path d="M1 5h2l3-3v10L3 9H1zM8 5q2 2 0 4M10 3.500q3 3.500 0 7M12 2q4 5 0 10" fill="none" stroke="#333"/></svg></button>
    </div>
    <button class="lang">ENG</button>
    <button class="clock"><span>12:43 PM</span><span>7/17/2022</span></button>
    <button class="note" aria-label="Notifications"><svg viewBox="0 0 14 14"><path d="M1 1.500h12v9.500H8.500L7 13l-1.500-2H1z" fill="none" stroke="#333"/></svg></button>
  </div>

  <div class="mark">
    <span class="rec">RECORDED WITH</span>
    <span class="som">SCREENCAST<svg viewBox="0 0 28 28"><circle cx="14" cy="14" r="12" fill="#dff0f8" stroke="#1f5f86" stroke-width="3"/><circle cx="14" cy="14" r="8.500" fill="none" stroke="#4c8fb5" stroke-width="1.500"/><circle cx="14" cy="14" r="5.500" fill="#4d9de0"/></svg>MATIC</span>
  </div>
</div>
</body>
</html>
```

FILE: styles.css
```css
* { box-sizing: border-box; }
body {
  margin: 0;
  padding: 4px 11px 5px 6px;
  min-height: 100vh;
  display: flex;
  background: #000;
  color: #222;
  font: 9px/12px "Open Sans", "Noto Sans", sans-serif;
}
button, select, input { font: inherit; color: inherit; margin: 0; }
button { background: none; border: 0; padding: 0; white-space: nowrap; }
h1, h2, ul { margin: 0; padding: 0; font-size: inherit; font-weight: 400; list-style: none; }
svg { display: block; flex: none; }
.defs { position: absolute; width: 0; height: 0; }
.app { position: relative; flex: 1; min-width: 0; display: flex; flex-direction: column; background: #fff; overflow: hidden; }

.titlebar { display: flex; align-items: center; height: 20px; padding: 0 3px 0 1px; gap: 3px; }
.titlebar h1 { flex: 1; white-space: nowrap; overflow: hidden; font: 10px/14px Roboto, sans-serif; }
.logo { width: 14px; height: 13px; }
.winctl { display: flex; }
.winctl button { width: 38px; display: flex; justify-content: center; }
.winctl svg { width: 10px; height: 10px; }

.menubar { display: flex; align-items: center; height: 16px; padding-left: 4px; gap: 10px; font-family: "Noto Sans", sans-serif; }
.mdi { width: 12px; height: 10px; margin-right: -4px; }
.mdictl { margin-left: auto; display: flex; }
.mdictl button { width: 16px; display: flex; justify-content: center; }
.mdictl svg { width: 6px; height: 6px; }

.ribbon { display: flex; height: 63px; background: #efeff2; border-top: 1px solid #dfdfe3; overflow: hidden; }
.group { flex: none; display: grid; grid-auto-flow: column; grid-template-rows: repeat(3, 17px); align-content: start; justify-content: start; padding-top: 3px; position: relative; align-items: center; }
.group::after { content: ""; position: absolute; right: 0; top: 3px; bottom: 3px; width: 1px; background: #dedee2; }
.group.dark::after { top: 6px; bottom: 6px; background: #a2a2a8; }
.cmd { display: flex; align-items: center; gap: 2px; height: 16px; text-align: left; }
.cmd svg { width: 13px; height: 13px; }
.cmd svg.caret { width: 5px; height: 3px; margin-left: 2px; }
.off { color: #a3a3a6; }
.faded { opacity: 0.4; }
.pressed { background: #cfd0cf; }
.ico { display: flex; justify-content: center; align-items: center; height: 17px; }
.ico svg { width: 13px; height: 13px; }
.big { grid-row: 1 / 4; align-self: start; display: flex; flex-direction: column; align-items: center; gap: 5px; padding-top: 3px; }
.big svg { width: 22px; height: 22px; }
.big .caret { width: 7px; height: 4px; margin-top: -2px; }

select {
  appearance: none; border: 0; border-radius: 0; height: 15px; padding: 0 10px 0 1px;
  background: #fff url("data:image/svg+xml,%3Csvg xmlns='http://www.w3.org/2000/svg' width='5' height='3'%3E%3Cpath d='M0 0h5L2.500 3z' fill='%23555'/%3E%3C/svg%3E") no-repeat right 2px center / 5px 3px;
}
.field { display: flex; align-items: center; gap: 1px; }
.field select { flex: 1; }
.g-clip { width: 129px; padding-left: 5px; grid-template-columns: 34px 42px 46px; }
.g-clip .big { justify-self: center; padding-right: 2px; }
.g-select { width: 97px; padding-left: 4px; grid-template-columns: 87px; }
.g-vis { width: 45px; grid-template-columns: 19px 20px; }
.g-zoom { width: 94px; grid-template-columns: 38px 54px; }
.g-fit { width: 72px; padding-left: 5px; }
.g-solid { width: 65px; padding-left: 2px; grid-auto-columns: 20px; }
.g-sheet { width: 46px; padding-left: 2px; grid-auto-columns: 20px; }
.g-line { width: 45px; padding-left: 1px; grid-auto-columns: 21px; }
.g-point { width: 27px; grid-auto-columns: 26px; }
.g-move { width: 52px; padding-left: 5px; }
.g-dup { width: 74px; padding-left: 5px; }
.g-dup .cmd { gap: 1px; }
.g-bool { width: 110px; padding-left: 6px; grid-template-columns: 54px 48px; }
.g-surf { width: 26px; grid-auto-columns: 25px; }
.g-fillet { width: 59px; padding-left: 5px; }
.g-sweep { width: 30px; padding-left: 6px; }
.g-sweep .cmd { gap: 0; }
.g-sweep .cmd svg.caret { margin: 0; }
.g-cs { width: 33px; padding-left: 4px; }
.g-measure { width: 69px; padding-left: 4px; }
.g-measure .cmd { justify-self: start; }
.g-measure .pressed { padding-right: 3px; }
.g-grid { width: 61px; padding-left: 4px; grid-template-columns: 52px; }
.g-grid .cmd { justify-self: start; padding: 0 3px 0 1px; }
.g-snap { width: 47px; padding-left: 3px; grid-auto-columns: 20px; }
.g-mat { width: 71px; padding-left: 3px; grid-template-columns: 63px; }
.g-mat .cmd svg { width: 13px; height: 11px; }

.tabs { display: flex; height: 19px; background: #f1f1ef; color: #555; border-bottom: 1px solid #8c8c8c; padding-left: 1px; }
.tabs > button { padding: 0 9px 3px; }
.tabs .active { color: #26708f; background: #f8f8f8; border: 1px solid #dadadd; border-top: 0; padding: 0 8px 2px; }
.help { margin-left: auto; display: flex; align-items: center; gap: 7px; padding: 0 3px 2px 0; }
.help svg { width: 12px; height: 12px; }

.work { flex: 1; min-height: 0; display: flex; background: #fff; }
.dock { width: 258px; display: flex; flex-direction: column; border-right: 5px solid #808084; }
.pane { display: flex; flex-direction: column; min-height: 0; }
.project { flex: 270; }
.props { flex: 268; background: #f3f3f3; border-top: 5px solid #808084; }
.panehead { display: flex; align-items: center; gap: 8px; height: 17px; flex: none; padding: 0 5px 0 3px; color: #333; background: linear-gradient(#c9cdd2, #d9dde1); }
.panehead h2 { flex: 1; }
.panehead svg { width: 7px; height: 7px; }
.ptree { flex: 1; background: #fff; padding: 1px 0 0 2px; font-family: Roboto, sans-serif; }
.ptree li { display: flex; align-items: center; height: 13px; }
.ptree .in { padding-left: 14px; }
.ptree svg { width: 12px; height: 11px; margin: 0 2px 0 5px; }
.cur { background: #f0f0f0; }
.exp { position: relative; width: 7px; height: 7px; flex: none; border: 1px solid #999; background: #fff; }
.exp::before { content: ""; position: absolute; left: 1px; top: 2px; width: 3px; height: 1px; background: #222; }
.exp::after { content: ""; position: absolute; left: 2px; top: 1px; width: 1px; height: 3px; background: #222; }
.exp.minus::after { display: none; }
.exp.none { visibility: hidden; }

.sheetbox { flex: 1; margin: 5px 3px 0 5px; background: #fff; border: 1px solid #777; min-height: 0; overflow: hidden; }
table { width: 100%; border-collapse: collapse; table-layout: fixed; font: 9px/12px "Liberation Sans", Arial, sans-serif; }
.c1 { width: 42px; } .c2 { width: 69px; } .c3 { width: 29px; } .c4 { width: 58px; }
th { height: 17px; padding: 0; font-weight: 400; background: #f0f0f0; border: 1px solid #777; white-space: nowrap; }
td { height: 15px; padding: 0 1px; border: 1px solid #c8c8c8; white-space: nowrap; overflow: hidden; }
th:first-child, td:first-child { border-left: 0; }
.mid { text-align: center; }
input[type="checkbox"] { appearance: none; display: block; margin: 0 auto; width: 11px; height: 11px; border: 1px solid #ddd; border-top-color: #666; border-left-color: #666; }
input:checked { background: url("data:image/svg+xml,%3Csvg xmlns='http://www.w3.org/2000/svg' viewBox='0 0 9 9'%3E%3Cpath d='M1.500 4l2 2.500 4-5' fill='none' stroke='%23000' stroke-width='1.800'/%3E%3C/svg%3E"); }
.swatch { display: block; width: 61px; height: 10px; margin: 0 auto; background: #8fae90; border: 1px solid #333; }
.value { display: block; width: 100%; height: 12px; line-height: 10px; background: #f0f0f0; border-right: 1px solid #777; border-bottom: 1px solid #777; }
.sheettabs { display: flex; height: 14px; padding: 0 5px; font-family: "Liberation Sans", Arial, sans-serif; align-items: flex-start; }
.sheettabs button { height: 11px; border: 1px solid #555; border-top: 0; padding: 0 2px; line-height: 10px; }
.sheettabs .on { height: 12px; line-height: 12px; border-left: 0; }

.model { width: 184px; display: flex; flex-direction: column; border-right: 2px solid #909090; }
.mtree { position: relative; flex: 1; overflow: hidden; }
.guides { position: absolute; left: 0; top: 0; width: 182px; height: 203px; }
.mtree ul { position: relative; display: grid; grid-auto-rows: 1fr; height: 203px; font-family: "Noto Sans", sans-serif; }
.mtree li { display: flex; align-items: center; padding-left: 2px; white-space: nowrap; }
.mtree .l1 { padding-left: 17px; }
.mtree .l2 { padding-left: 31px; }
.mtree .l3 { padding-left: 45px; }
.mtree .l4 { padding-left: 60px; }
.mtree li svg { width: 12px; height: 10px; margin: 0 2px 0 5px; }
.mtree span { padding: 0 1px; line-height: 13px; }
.sel { background: #0a74cc; color: #e8f4ff; }
.hscroll { display: flex; align-items: center; height: 13px; background: #f0f0f0; padding: 0 4px 0 2px; gap: 4px; }
.hscroll svg { width: 8px; height: 8px; }
.thumb { flex: 1; height: 11px; background: #cdcdcd; }
.view { flex: 1; min-width: 0; position: relative; overflow: hidden; }
.scene { position: absolute; left: 0; top: 0; width: 100%; height: 100%; }
.scene text, .edt { font-family: "Liberation Sans", Arial, sans-serif; }
.axis { font-size: 10px; }
.triad { font-size: 9px; font-weight: 700; }
.scale { font-size: 9px; fill: #222; }
.brand { font-size: 11px; font-weight: 700; fill: #333; }
.teal { fill: #4a9a8a; }
.green { fill: #1f8a30; }
.red { fill: #d02030; }
.blue { fill: #4060b0; }
.edt { font-size: 7px; font-weight: 700; fill: #fff; }

.status { display: flex; align-items: center; gap: 3px; height: 21px; padding: 1px 2px 0 3px; background: #d0d4da; font-family: "Liberation Sans", Arial, sans-serif; }
.status span { flex: 1; }
.status button { display: flex; align-items: center; gap: 6px; height: 17px; padding: 0 6px 0 4px; background: #e6e6e6; border: 1px solid #c2c2c2; }
.status svg { width: 8px; height: 8px; }

.taskbar { display: flex; height: 32px; background: linear-gradient(90deg, #d2e7ee, #d3e6ee 60%, #d8e0ec 68%, #dbe0ec); }
.taskbar button { display: flex; align-items: center; justify-content: center; }
.start { width: 39px; }
.start svg { width: 12px; height: 12px; }
.search { width: 282px; display: flex; background: #fff; }
.search input { flex: 1; min-width: 0; border: 0; background: none; padding: 0 0 0 36px; font-size: 11px; }
.search svg { width: 60px; height: 32px; }
.search > svg { margin-right: 2px; }
.apps { display: flex; flex: 1; }
.apps button { width: 41px; border-bottom: 2px solid transparent; }
.apps svg { width: 20px; height: 20px; }
.apps .run { border-bottom-color: #1268b0; }
.apps .now { background: #f1f6fa; }
.spin { width: 14px; display: flex; flex-direction: column; justify-content: space-around; background: #eef2f5; }
.spin svg { width: 8px; height: 5px; }
.tip { width: 38px; }
.tip svg { width: 18px; height: 18px; }
.weather { width: 72px; gap: 7px; font-size: 12px; }
.weather svg { width: 18px; height: 18px; }
.tray { display: flex; }
.tray button { width: 26px; }
.tray svg { width: 14px; height: 14px; }
.lang { width: 31px; font-size: 10px; }
.taskbar .clock { width: 56px; flex-direction: column; font-size: 10px; line-height: 15px; }
.note { width: 43px; padding-right: 11px; }
.note svg { width: 14px; height: 14px; }

.mark { position: absolute; left: 9px; bottom: 1px; color: #fff; font-family: Lato, sans-serif; font-weight: 900; text-shadow: 1px 1px 1px #222, -1px -1px 1px #222, 1px -1px 1px #222, -1px 1px 1px #222; pointer-events: none; }
.mark .rec { display: block; font-size: 10px; line-height: 12px; }
.mark .som { display: flex; align-items: center; font-size: 15px; line-height: 30px; gap: 3px; }
.mark svg { width: 29px; height: 29px; }
```
